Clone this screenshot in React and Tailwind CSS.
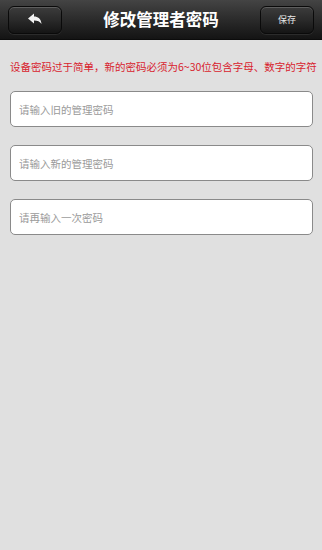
import { useState } from "react";

const font = { fontFamily: '"Noto Sans CJK SC", "Liberation Sans", sans-serif' };

function HeaderButton({ children, label }) {
  return (
    <button
      aria-label={label}
      className="relative flex h-[28px] w-[54px] items-center justify-center overflow-hidden rounded-[6px] border border-[#0a0a0a] bg-gradient-to-b from-[#3c3c3c] via-[#2a2a2a] to-[#151515] shadow-[inset_0_1px_0_rgba(255,255,255,0.18),0_1px_0_rgba(255,255,255,0.08)]"
    >
      {children}
    </button>
  );
}

function Field({ placeholder, value, onChange }) {
  return (
    <input
      type="password"
      value={value}
      onChange={onChange}
      placeholder={placeholder}
      className="h-[36px] w-full rounded-[5px] border border-[#8a8a8a] bg-white px-[8px] text-[10.5px] text-[#333] placeholder:text-[#9a9a9a] outline-none"
      style={font}
    />
  );
}

export default function App() {
  const [form, setForm] = useState({ old: "", next: "", again: "" });
  const set = (k) => (e) => setForm({ ...form, [k]: e.target.value });

  return (
    <div className="flex min-h-[550px] w-full flex-col bg-[#e0e0e0]" style={font}>
      <header className="flex h-[40px] items-center justify-between border-b border-[#0c0c0c] bg-gradient-to-b from-[#444] via-[#2b2b2b] to-[#141414] px-[8px]">
        <HeaderButton label="返回">
          <svg width="16" height="14" viewBox="0 0 16 14" fill="#f2f2f2">
            <path d="M1 5.5 L7 0.5 L7 3.5 C11 3.5 14 5.5 14.5 11 C13 8.5 10.5 7.5 7 7.5 L7 10.5 Z" />
          </svg>
        </HeaderButton>
        <h1 className="text-[16.5px] font-bold text-white">修改管理者密码</h1>
        <HeaderButton label="保存">
          <span className="text-[9px] text-[#e8e8e8]">保存</span>
        </HeaderButton>
      </header>

      <p className="mt-[20px] whitespace-nowrap px-[10px] text-[10.5px] leading-[14px] text-[#d8232e]">
        设备密码过于简单，新的密码必须为6~30位包含字母、数字的字符
      </p>

      <div className="mt-[17px] flex flex-col gap-[18px] pl-[10px] pr-[9px]">
        <Field placeholder="请输入旧的管理密码" value={form.old} onChange={set("old")} />
        <Field placeholder="请输入新的管理密码" value={form.next} onChange={set("next")} />
        <Field placeholder="请再输入一次密码" value={form.again} onChange={set("again")} />
      </div>
    </div>
  );
}
